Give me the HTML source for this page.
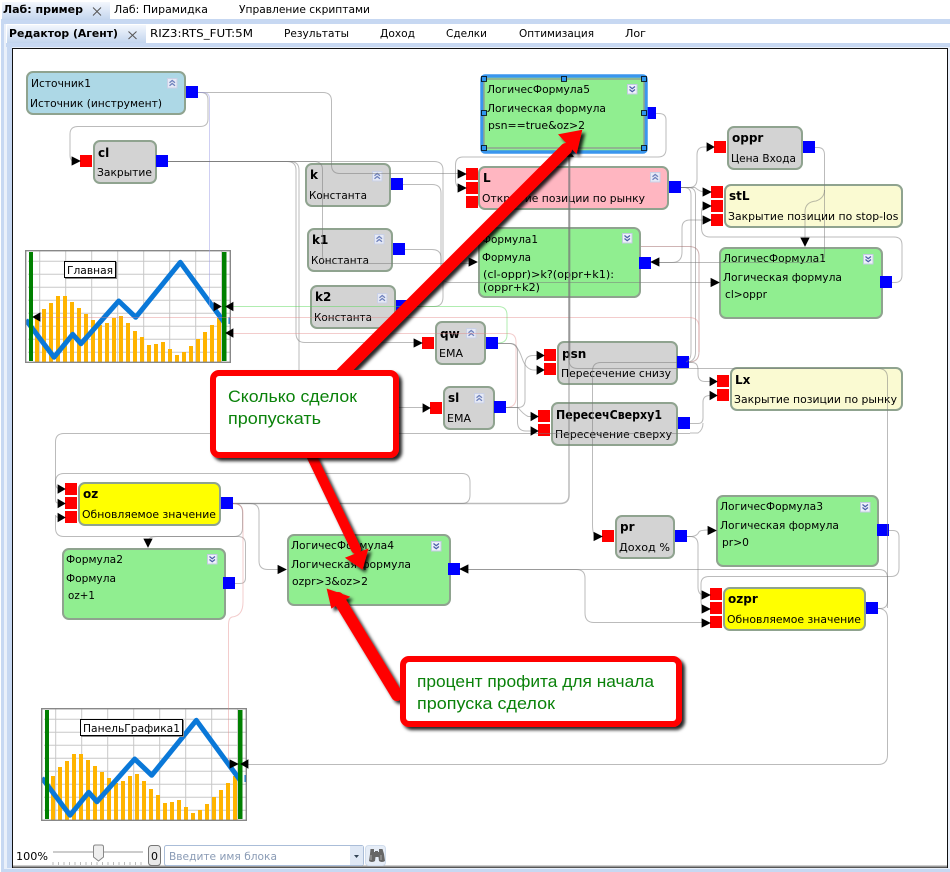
<!DOCTYPE html>
<html><head><meta charset="utf-8"><style>
html,body{margin:0;padding:0;background:#fff}
svg{display:block}
text{font-family:"DejaVu Sans","Liberation Sans",sans-serif;font-size:11px;fill:#000}
.b{font-weight:bold}
.n{font-weight:bold;font-size:12px;fill:#000}
.c{font-family:"Liberation Sans",sans-serif;font-size:17px;fill:#0a820a}
.bk{stroke:#8fa38f;stroke-width:2}
.w path{fill:none;stroke:#777;stroke-opacity:.5;stroke-width:1}
</style></head><body>
<svg width="950" height="872" viewBox="0 0 950 872" xmlns="http://www.w3.org/2000/svg">
<defs>
<linearGradient id="tg" x1="0" y1="0" x2="0" y2="1"><stop offset="0" stop-color="#f3f7fd"/><stop offset="1" stop-color="#c3d5ee"/></linearGradient>
<filter id="sh" x="-20%" y="-20%" width="140%" height="140%"><feDropShadow dx="3" dy="3" stdDeviation="1.6" flood-color="#000" flood-opacity=".85"/></filter>
<g id="up"><rect x=".5" y=".5" width="9.500" height="9.500" fill="#e6eaf6" stroke="#c9d0e6"/><path d="M2.500 4.700L5.200 2.500 8 4.700M2.500 7.700L5.200 5.500 8 7.700" fill="none" stroke="#6f82bd" stroke-width="1.300"/></g>
<g id="dn"><rect x=".5" y=".5" width="9.500" height="9.500" fill="#eef1fa" stroke="#c2cae2"/><path d="M2.500 2.500L5.200 4.700 8 2.500M2.500 5.500L5.200 7.700 8 5.500" fill="none" stroke="#4a5fa8" stroke-width="1.300"/></g>
<g id="chart">
<rect x="26" y="251" width="204" height="111" fill="#fff"/>
<path d="M39.700 251V362M65.700 251V362M91.700 251V362M117.700 251V362M143.700 251V362M169.700 251V362M195.700 251V362M221.700 251V362M28 261.300H230M28 274.300H230M28 287.300H230M28 300.300H230M28 313.300H230M28 326.300H230M28 339.300H230M28 352.300H230" stroke="#c8c8c8" stroke-width="1" fill="none"/>
<path fill="#ffb400" d="M35 318h4v44h-4zM42 309h4v53h-4zM49 303h4v59h-4zM56 296h4v66h-4zM63 296h4v66h-4zM70 302h4v60h-4zM77 308h4v54h-4zM84 314h4v48h-4zM91 320h4v42h-4zM98 325h4v37h-4zM105 323h4v39h-4zM112 318h4v44h-4zM119 316h4v46h-4zM126 323h4v39h-4zM133 331h4v31h-4zM140 337h4v25h-4zM147 345h4v17h-4zM154 344h4v18h-4zM161 342h4v20h-4zM168 349h4v13h-4zM175 355h4v7h-4zM182 352h4v10h-4zM189 346h4v16h-4zM196 339h4v23h-4zM203 332h4v30h-4zM210 325h4v37h-4zM217 318h4v44h-4z"/>
<path d="M26 320L54 357.300 72.700 334.300 81 343.700 118.700 301 135.700 317.300 180.300 262.300 224 322" fill="none" stroke="#0a78d8" stroke-width="5" stroke-linejoin="round"/>
<rect x="29" y="252" width="4" height="109" fill="#008000"/>
<rect x="222" y="252" width="4.500" height="109" fill="#008000"/>
<rect x="228.500" y="317" width="1.500" height="7" fill="#0a78d8"/>
<rect x="20" y="250" width="5.300" height="114" fill="#fff"/>
<rect x="25.700" y="250.700" width="204.600" height="111.600" fill="none" stroke="#888" stroke-width="1.400"/>
</g>
</defs>

<!-- frame -->
<rect width="950" height="872" fill="#fff"/>
<rect x="1" y="19" width="949" height="853" fill="#c7d8f2"/>
<rect x="4" y="24" width="946" height="845" fill="#eaf0fa"/>
<rect x="6" y="24" width="944" height="19" fill="#fff"/>
<rect x="6" y="43" width="944" height="4" fill="#c7d8f2"/>
<rect x="7" y="26" width="5" height="842" fill="#c7d8f2"/>
<rect x="2" y="2" width="108" height="18" fill="url(#tg)"/>
<rect x="7" y="25" width="139" height="18" fill="url(#tg)"/>
<text x="3" y="13" class="b" textLength="80" lengthAdjust="spacingAndGlyphs">Лаб: пример</text>
<path d="M93 7.500l8 8M101 7.500l-8 8" stroke="#555" fill="none"/>
<text x="114" y="13" textLength="94" lengthAdjust="spacingAndGlyphs">Лаб: Пирамидка</text>
<text x="239" y="13" textLength="131" lengthAdjust="spacingAndGlyphs">Управление скриптами</text>
<text x="9" y="37" class="b" textLength="109" lengthAdjust="spacingAndGlyphs">Редактор (Агент)</text>
<path d="M128.500 31.500l8 7.500M136.500 31.500l-8 7.500" stroke="#555" fill="none"/>
<text x="150" y="37" textLength="103" lengthAdjust="spacingAndGlyphs">RIZ3:RTS_FUT:5M</text>
<text x="284" y="37" textLength="65" lengthAdjust="spacingAndGlyphs">Результаты</text>
<text x="380" y="37" textLength="35" lengthAdjust="spacingAndGlyphs">Доход</text>
<text x="446" y="37" textLength="41" lengthAdjust="spacingAndGlyphs">Сделки</text>
<text x="519" y="37" textLength="75" lengthAdjust="spacingAndGlyphs">Оптимизация</text>
<text x="625" y="37" textLength="21" lengthAdjust="spacingAndGlyphs">Лог</text>
<rect x="12.500" y="48.500" width="935" height="819" fill="#fff" stroke="#111"/>
<rect x="13" y="865.500" width="934" height="2" fill="#999"/>

<!-- charts -->
<use href="#chart"/>
<use href="#chart" transform="translate(16 458)"/>
<rect x="64.500" y="261.500" width="51" height="16" fill="#fff" stroke="#000"/>
<path d="M116.500 262V278.500H65" stroke="#888" fill="none"/>
<text x="67" y="274" textLength="46" lengthAdjust="spacingAndGlyphs">Главная</text>
<rect x="80.500" y="719.500" width="102" height="16" fill="#fff" stroke="#000"/>
<path d="M183.500 720V736.500H81" stroke="#888" fill="none"/>
<text x="83" y="732" textLength="97" lengthAdjust="spacingAndGlyphs">ПанельГрафика1</text>

<!-- hidden-behind parts -->
<rect x="645" y="107" width="11" height="12" fill="#00f"/>
<path d="M569 150l5 7h-9z" fill="#000"/>

<!-- blocks -->
<rect x="27" y="72" width="158" height="42" rx="6" fill="#add8e6" class="bk"/>
<text x="31" y="87" textLength="60" lengthAdjust="spacingAndGlyphs">Источник1</text>
<text x="30" y="107" textLength="132" lengthAdjust="spacingAndGlyphs">Источник (инструмент)</text>
<use href="#up" x="167" y="78"/>

<rect x="94" y="141" width="62" height="42" rx="6" fill="#d3d3d3" class="bk"/>
<text x="98" y="157" class="n">cl</text>
<text x="97" y="176" textLength="55" lengthAdjust="spacingAndGlyphs">Закрытие</text>

<rect x="306" y="164" width="84" height="42" rx="6" fill="#d3d3d3" class="bk"/>
<text x="310" y="179" class="n">k</text>
<text x="309" y="199" textLength="58" lengthAdjust="spacingAndGlyphs">Константа</text>
<use href="#up" x="372" y="171"/>

<rect x="308" y="229" width="84" height="42" rx="6" fill="#d3d3d3" class="bk"/>
<text x="312" y="244" class="n">k1</text>
<text x="311" y="264" textLength="58" lengthAdjust="spacingAndGlyphs">Константа</text>
<use href="#up" x="374" y="234"/>

<rect x="311" y="286" width="84" height="42" rx="6" fill="#d3d3d3" class="bk"/>
<text x="315" y="301" class="n">k2</text>
<text x="314" y="321" textLength="58" lengthAdjust="spacingAndGlyphs">Константа</text>
<use href="#up" x="377" y="293"/>

<rect x="436" y="322" width="49" height="42" rx="6" fill="#d3d3d3" class="bk"/>
<text x="440" y="338" class="n">qw</text>
<text x="439" y="357">EMA</text>
<use href="#up" x="466" y="328"/>

<rect x="444" y="387" width="50" height="42" rx="6" fill="#d3d3d3" class="bk"/>
<text x="448" y="402" class="n">sl</text>
<text x="447" y="422">EMA</text>
<use href="#up" x="474" y="393"/>

<rect x="482" y="76" width="164" height="76" rx="3" fill="#90ee90" stroke="#3a96ee" stroke-width="3.500"/>
<rect x="484" y="79" width="160" height="69" fill="#90ee90" stroke="#8fa38f" stroke-width="1.500"/>
<text x="487" y="93" textLength="103" lengthAdjust="spacingAndGlyphs">ЛогичесФормула5</text>
<text x="487" y="112" textLength="119" lengthAdjust="spacingAndGlyphs">Логическая формула</text>
<text x="488" y="129" textLength="97" lengthAdjust="spacingAndGlyphs">psn==true&amp;oz&gt;2</text>
<use href="#dn" x="627" y="84"/>
<path fill="#2f96ef" stroke="#000" stroke-width=".8" d="M481.500 76.500h5v5h-5zM561.500 76.500h5v5h-5zM641.500 76.500h5v5h-5zM481.500 110.500h5v5h-5zM641.500 110.500h5v5h-5zM481.500 145.500h5v5h-5zM641.500 145.500h5v5h-5z"/>

<rect x="479" y="167" width="189" height="42" rx="6" fill="#ffb6c1" class="bk"/>
<text x="483" y="182" class="n">L</text>
<text x="482" y="202" textLength="163" lengthAdjust="spacingAndGlyphs">Открытие позиции по рынку</text>
<use href="#up" x="650" y="172"/>

<rect x="479" y="228" width="161" height="69" rx="6" fill="#90ee90" class="bk"/>
<text x="482" y="243" textLength="56" lengthAdjust="spacingAndGlyphs">Формула1</text>
<text x="482" y="261" textLength="49" lengthAdjust="spacingAndGlyphs">Формула</text>
<text x="483" y="278" textLength="131" lengthAdjust="spacingAndGlyphs">(cl-oppr)&gt;k?(oppr+k1):</text>
<text x="483" y="291" textLength="57" lengthAdjust="spacingAndGlyphs">(oppr+k2)</text>
<use href="#dn" x="622" y="233"/>

<rect x="728" y="127" width="74" height="42" rx="6" fill="#d3d3d3" class="bk"/>
<text x="732" y="142" class="n">oppr</text>
<text x="731" y="162" textLength="65" lengthAdjust="spacingAndGlyphs">Цена Входа</text>

<rect x="725" y="185" width="177" height="42" rx="6" fill="#fafad2" class="bk"/>
<text x="729" y="200" class="n">stL</text>
<svg x="725" y="185" width="173" height="42"><text x="3" y="35" textLength="176" lengthAdjust="spacingAndGlyphs">Закрытие позиции по stop-loss</text></svg>

<rect x="720" y="248" width="162" height="70" rx="6" fill="#90ee90" class="bk"/>
<text x="723" y="262" textLength="103" lengthAdjust="spacingAndGlyphs">ЛогичесФормула1</text>
<text x="723" y="281" textLength="119" lengthAdjust="spacingAndGlyphs">Логическая формула</text>
<text x="725" y="298" textLength="42" lengthAdjust="spacingAndGlyphs">cl&gt;oppr</text>
<use href="#dn" x="863" y="254"/>

<rect x="558" y="342" width="119" height="42" rx="6" fill="#d3d3d3" class="bk"/>
<text x="562" y="358" class="n">psn</text>
<text x="561" y="377" textLength="110" lengthAdjust="spacingAndGlyphs">Пересечение снизу</text>

<rect x="552" y="403" width="125" height="42" rx="6" fill="#d3d3d3" class="bk"/>
<text x="556" y="419" class="n" textLength="106" lengthAdjust="spacingAndGlyphs">ПересечСверху1</text>
<text x="555" y="438" textLength="117" lengthAdjust="spacingAndGlyphs">Пересечение сверху</text>

<rect x="731" y="368" width="171" height="42" rx="6" fill="#fafad2" class="bk"/>
<text x="735" y="384" class="n">Lx</text>
<text x="734" y="403" textLength="163" lengthAdjust="spacingAndGlyphs">Закрытие позиции по рынку</text>

<rect x="79" y="483" width="141" height="42" rx="6" fill="#ffff00" class="bk"/>
<text x="83" y="498" class="n">oz</text>
<text x="82" y="518" textLength="134" lengthAdjust="spacingAndGlyphs">Обновляемое значение</text>

<rect x="63" y="549" width="162" height="70" rx="6" fill="#90ee90" class="bk"/>
<text x="66" y="563" textLength="57" lengthAdjust="spacingAndGlyphs">Формула2</text>
<text x="66" y="582" textLength="50" lengthAdjust="spacingAndGlyphs">Формула</text>
<text x="68" y="599" textLength="27" lengthAdjust="spacingAndGlyphs">oz+1</text>
<use href="#dn" x="207" y="554"/>

<rect x="288" y="535" width="162" height="70" rx="6" fill="#90ee90" class="bk"/>
<text x="291" y="549" textLength="103" lengthAdjust="spacingAndGlyphs">ЛогичесФормула4</text>
<text x="291" y="568" textLength="120" lengthAdjust="spacingAndGlyphs">Логическая формула</text>
<text x="292" y="585" textLength="76" lengthAdjust="spacingAndGlyphs">ozpr&gt;3&amp;oz&gt;2</text>
<use href="#dn" x="431" y="541"/>

<rect x="616" y="516" width="58" height="42" rx="6" fill="#d3d3d3" class="bk"/>
<text x="620" y="531" class="n">pr</text>
<text x="619" y="551" textLength="51" lengthAdjust="spacingAndGlyphs">Доход %</text>

<rect x="717" y="496" width="161" height="70" rx="6" fill="#90ee90" class="bk"/>
<text x="720" y="510" textLength="103" lengthAdjust="spacingAndGlyphs">ЛогичесФормула3</text>
<text x="720" y="529" textLength="119" lengthAdjust="spacingAndGlyphs">Логическая формула</text>
<text x="722" y="546" textLength="27" lengthAdjust="spacingAndGlyphs">pr&gt;0</text>
<use href="#dn" x="860" y="502"/>

<rect x="724" y="588" width="141" height="42" rx="6" fill="#ffff00" class="bk"/>
<text x="728" y="603" class="n">ozpr</text>
<text x="727" y="623" textLength="134" lengthAdjust="spacingAndGlyphs">Обновляемое значение</text>

<!-- ports -->
<path fill="#0000ff" d="M186 86h12v12h-12zM156 155h12v12h-12zM391 178h12v12h-12zM393 243h12v12h-12zM396 300h12v12h-12zM486 337h12v12h-12zM494 401h12v12h-12zM669 181h12v12h-12zM639 257h12v12h-12zM803 141h12v12h-12zM880 276h12v12h-12zM677 356h12v12h-12zM678 417h12v12h-12zM221 497h12v12h-12zM223 577h12v12h-12zM448 563h12v12h-12zM675 530h12v12h-12zM877 524h12v12h-12zM866 602h12v12h-12z"/>
<path fill="#ff0000" d="M80 155h12v12h-12zM422 337h12v12h-12zM430 402h12v12h-12zM466 168h12v12h-12zM466 182h12v12h-12zM466 196h12v12h-12zM714 141h12v12h-12zM711 186h12v12h-12zM711 200h12v12h-12zM711 214h12v12h-12zM544 349h12v12h-12zM544 363h12v12h-12zM538 410h12v12h-12zM538 424h12v12h-12zM717 375h12v12h-12zM717 389h12v12h-12zM65 483h12v12h-12zM65 497h12v12h-12zM65 511h12v12h-12zM602 530h12v12h-12zM710 588h12v12h-12zM710 602h12v12h-12zM710 616h12v12h-12z"/>

<!-- wires -->
<g class="w">
<path d="M198 92.500H201Q208 92.500 208 100V119Q208 126.500 200 126.500H78Q70 126.500 70 134V155Q70 161 74 161"/>
<path d="M198 92.500H323Q331.500 92.500 331.500 101V165Q331.500 173.500 340 173.500H460"/>
<path d="M198 92.500H203Q209.500 92.500 209.500 99V306" style="stroke:#a0a0e8"/>
<path d="M168 161.500H287Q296 161.500 296 170V333Q296 342.500 305 342.500H416"/>
<path d="M168 161.500H290Q299 161.500 299 170V398Q299 407.500 308 407.500H425"/>
<path d="M168 161.500H314Q322.500 161.500 322.500 170V255Q322.500 263.500 331 263.500H471"/>
<path d="M168 161.500H434Q443 161.500 443 170V297Q443 306.500 434 306.500H408"/>
<path d="M403 184.500H432Q441 184.500 441 193V273Q441 282.500 450 282.500H712"/>
<path d="M405 249.500H432Q441 249.500 441 258V275"/>
<path d="M656 113.500H659Q666 113.500 666 120V149Q666 157 658 157H463Q455.500 157 455.500 165V180Q455.500 188 462 188"/>
<path d="M681 187.500H689Q697 187.500 697 179V155Q697 147 704 147H708"/>
<path d="M681 187.500H695Q700 192 705 192"/>
<path d="M681 187.500H684Q691 187.500 691 195V352Q691 360 686 362"/>
<path d="M681 187.500H688Q695.500 187.500 695.500 195V352Q695.500 360 689 362"/>
<path d="M892 282.500H895Q902 282.500 902 275V245Q902 237 894 237H710Q701.500 237 701.500 228V212Q701.500 206 706 206"/>
<path d="M659 262.500H672Q682 262.500 682 252V228Q682 220 690 220H704"/>
<path d="M659 262.500H816Q824.500 262.500 824.500 254V155Q824.500 147.500 818 147.500H815"/>
<path d="M824.500 190Q824.500 198 816 201 805 202 805 212V240"/>
<path d="M641 246.500H689Q699 246.500 699 256V352Q699 362 689 362" style="stroke:#a06a6a"/>
<path d="M40 317.500H689Q699 317.500 699 327V352" style="stroke:#e08080;stroke-opacity:.4"/>
<path d="M233 333.500H508Q516 333.500 516 342V398Q516 407.500 506 407.500" style="stroke:#e08080;stroke-opacity:.4"/>
<path d="M233 306.500H498Q507 306.500 507 315V335Q507 343 498 343" style="stroke:#50d850;stroke-opacity:.45"/>
<path d="M506 407.500H518Q525 407.500 525 400V365Q525 355.500 533 355.500H538"/>
<path d="M506 407.500H518Q523 414 528 416.500H532"/>
<path d="M498 343.500H510Q517.500 343.500 517.500 351V422Q517.500 431 526 431H532"/>
<path d="M498 343.500H510Q517 343.500 522 358 526 370 534 370H538"/>
<path d="M689 362.500H692Q698 362.500 698 370V374Q698 381.500 705 381.500H711"/>
<path d="M690 423.500H698Q703 423.500 703 418V402Q703 395.500 710 395.500H711"/>
<path d="M690 433H698Q703 430 703 423"/>
<path d="M690 433.500H64Q55.500 433.500 55.500 442V482Q55.500 489 60 489"/>
<path d="M569 157V360Q569 368.500 578 368.500H878Q887.500 368.500 887.500 378V608"/>
<path d="M569.500 157V360" style="stroke-width:2"/>
<path d="M233 503.500H560Q569 503.500 569 495V157" style="stroke-width:1.500"/>
<path d="M233 503.500H462Q470 503.500 470 495V482Q470 473.500 462 473.500H64Q55.500 473.500 55.500 482V500Q55.500 503.500 60 503.500"/>
<path d="M233 503.500H234Q242.500 503.500 242.500 512V528Q242.500 536.500 234 536.500H64Q55.500 536.500 55.500 528V515Q55.500 517.500 60 517.500"/>
<path d="M233 503.500H250Q259 503.500 259 512V561Q259 569.500 268 569.500H280"/>
<path d="M235 583.500H240Q245.500 583.500 245.500 578V544Q245.500 536.500 238 536.500H157Q149 536.500 148 541"/>
<path d="M233 503.500H235Q243 505 243 513V602Q243 616 232 617 228.500 618 228.500 625V755Q228.500 764 232 764" style="stroke:#e08080;stroke-opacity:.4"/>
<path d="M677 362.500H601Q592.500 362.500 592.500 371V525Q592.500 536 597 536"/>
<path d="M878 608.500H880Q887.500 608.500 887.500 601V578Q887.500 569.500 879 569.500H468"/>
<path d="M460 569.500H576Q585 569.500 585 578V613Q585 622.500 594 622.500H704"/>
<path d="M878 608.500H880Q887.500 610 887.500 618V755Q887.500 764.500 878 764.500H248"/>
<path d="M889 530.500H893Q899 530.500 899 537V568Q899 576.500 891 576.500H709Q701 576.500 701 584V600Q701 608 705 608"/>
<path d="M687 536.500H692Q697 536 699 532 700 530 709 530"/>
<path d="M687 536.500H690Q698 536.500 698 545V587Q698 595 704 595"/>
</g>

<!-- arrowheads -->
<path fill="#000" stroke="#000" stroke-width=".8" d="M72 157l8 4-8 4zM458 170l8 4-8 4zM458 184l8 4-8 4zM707 143l7 4-7 4zM703 188l8 4-8 4zM703 202l8 4-8 4zM703 216l8 4-8 4zM469 258l8 4-8 4zM711 278.500l8 4-8 4zM414 339l8 4-8 4zM423 404l7 4-7 4zM537 351.500l7 4-7 4zM537 366l7 4-7 4zM531 412.500l7 4-7 4zM531 427l7 4-7 4zM710 377.500l7 4-7 4zM710 391.500l7 4-7 4zM58 485l7 4-7 4zM58 499.500l7 4-7 4zM58 513.500l7 4-7 4zM278 565.500l8 4-8 4zM594 532.500l8 4-8 4zM708 526.500l8 4-8 4zM702 591l8 4-8 4zM702 605l8 4-8 4zM702 619l8 4-8 4zM214 302.500l7 4-7 4zM230 760l8 4-8 4z"/>
<path fill="#000" stroke="#000" stroke-width=".8" d="M40 313l-7 4 7 4zM233 302.500l-7 4 7 4zM233 329l-7 4 7 4zM248 760l-7 4 7 4zM659 258l-8 4 8 4zM468 565l-8 4 8 4zM144 539h8l-4 8zM801 238h8l-4 8z"/>

<!-- annotations -->
<g filter="url(#sh)">
<path d="M342 373L566 149" stroke="#f00" stroke-width="12" stroke-linecap="round"/>
<path d="M560 135L581 131 576 152z" fill="#f00" stroke="#f00" stroke-width="2"/>
<path d="M311 455L356 549" stroke="#f00" stroke-width="10" stroke-linecap="round"/>
<path d="M347 558L362 568 367 550z" fill="#f00" stroke="#f00" stroke-width="2"/>
<path d="M397 695L338 598" stroke="#f00" stroke-width="12" stroke-linecap="round"/>
<path d="M328 590L332 607 348 597z" fill="#f00" stroke="#f00" stroke-width="2"/>
</g>
<rect x="213" y="373" width="183" height="82" rx="6" fill="#fff" stroke="#f00" stroke-width="6" filter="url(#sh)"/>
<text x="228" y="402" class="c" textLength="129" lengthAdjust="spacingAndGlyphs">Сколько сделок</text>
<text x="228" y="424" class="c" textLength="93" lengthAdjust="spacingAndGlyphs">пропускать</text>
<rect x="403" y="659" width="276" height="65" rx="6" fill="#fff" stroke="#f00" stroke-width="6" filter="url(#sh)"/>
<text x="417" y="687" class="c" textLength="237" lengthAdjust="spacingAndGlyphs">процент профита для начала</text>
<text x="417" y="709" class="c" textLength="138" lengthAdjust="spacingAndGlyphs">пропуска сделок</text>

<!-- toolbar -->
<text x="16" y="860" textLength="32" lengthAdjust="spacingAndGlyphs">100%</text>
<rect x="53" y="851" width="90" height="2" fill="#ccc"/>
<path d="M53 862v3M58.500 862v3M64 862v3M69.500 862v3M75 862v3M80.500 862v3M86 862v3M91.500 862v3M97 862v3M102.500 862v3M108 862v3M113.500 862v3M119 862v3M124.500 862v3M130 862v3M135.500 862v3M141 862v3" stroke="#bbb" fill="none"/>
<path d="M93.500 847q0-2 2-2h6q2 0 2 2v10l-5 4-5-4z" fill="#eee" stroke="#888"/>
<rect x="148.500" y="845.500" width="12" height="20" rx="3" fill="#e8e8e8" stroke="#777"/>
<text x="151" y="860">0</text>
<rect x="164.500" y="845.500" width="199" height="20" rx="2" fill="#fff" stroke="#aabdd8"/>
<text x="169" y="860" textLength="108" lengthAdjust="spacingAndGlyphs" style="fill:#8a9bb5">Введите имя блока</text>
<rect x="350" y="846" width="13" height="19" fill="#dfe8f5"/>
<path d="M354 855h5l-2.500 3z" fill="#345"/>
<rect x="365.500" y="845.500" width="20" height="20" rx="3" fill="#e6edf7" stroke="#d0dcec"/>
<path d="M370.500 849h3.500v3h1v-1h3v1h1v-3h3.500l1.500 5 1 7q-3 2-6 0l-.5-4h-3l-.5 4q-3 2-6 0l1-7z" fill="#666"/>
<path d="M371 855v5M381 855v5" stroke="#aaa" fill="none"/>
</svg>
</body></html>
